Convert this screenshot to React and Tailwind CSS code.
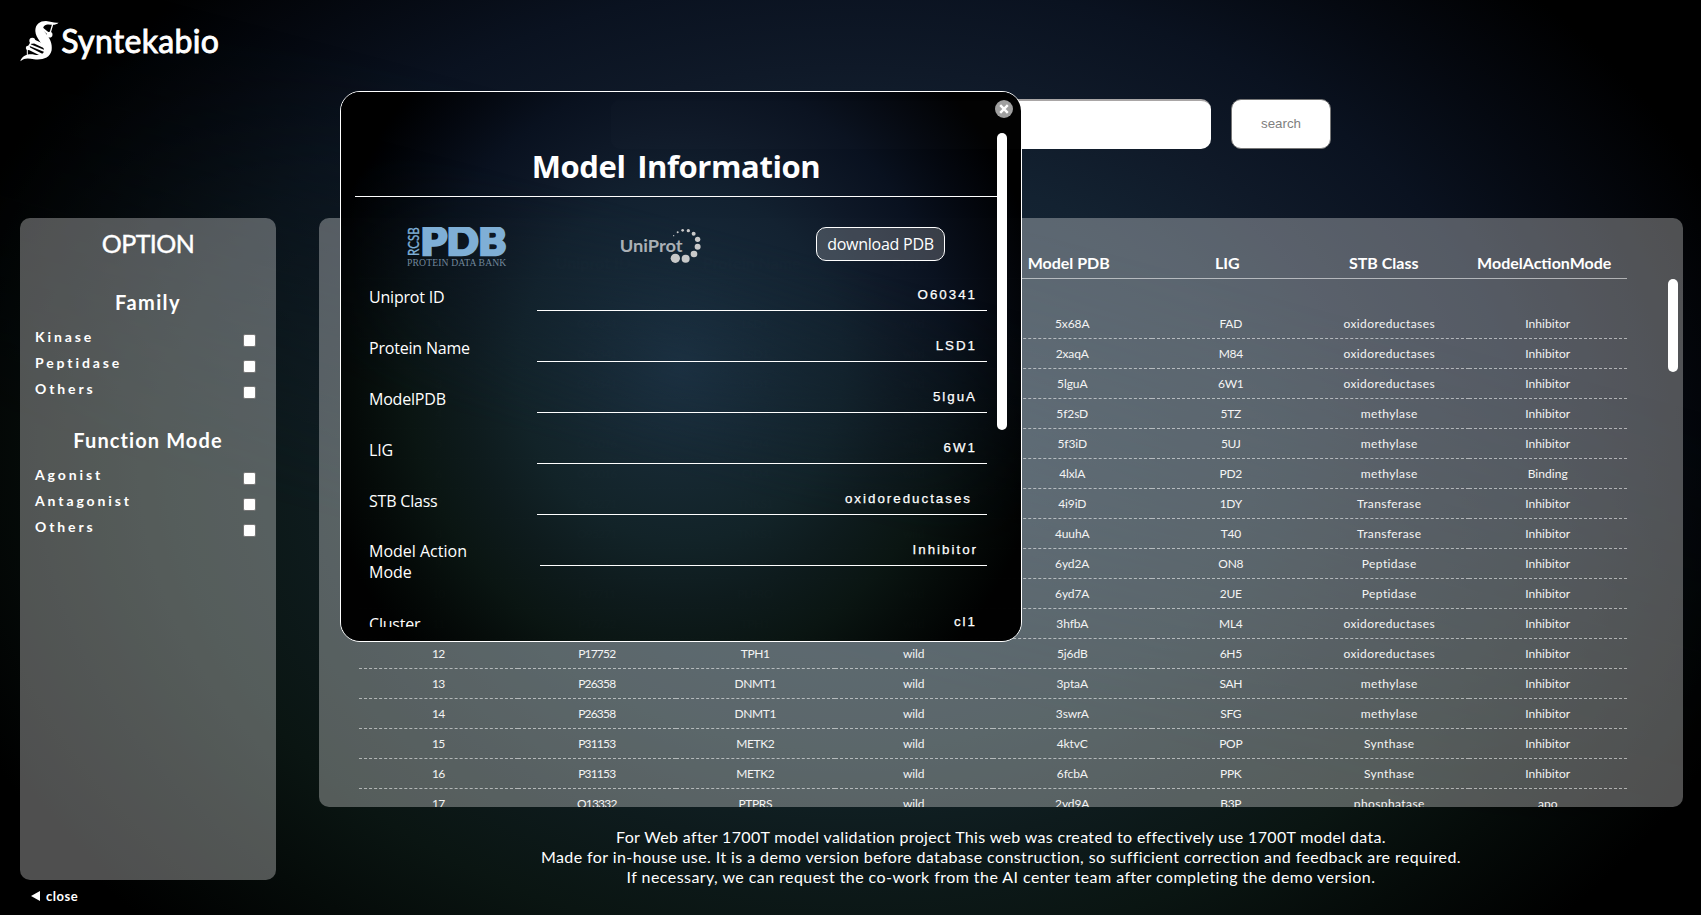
import React from "react";

const families = ["Kinase", "Peptidase", "Others"];
const modes = ["Agonist", "Antagonist", "Others"];

const headers = ["No", "Uniprot ID", "Protein Name", "State", "Model PDB", "LIG", "STB Class", "ModelActionMode"];

const rows = [
  ["1", "O60341", "LSD1", "wild", "5x68A", "FAD", "oxidoreductases", "Inhibitor"],
  ["2", "O60341", "LSD1", "wild", "2xaqA", "M84", "oxidoreductases", "Inhibitor"],
  ["3", "O60341", "LSD1", "wild", "5lguA", "6W1", "oxidoreductases", "Inhibitor"],
  ["4", "O60016", "CLR4", "wild", "5f2sD", "5TZ", "methylase", "Inhibitor"],
  ["5", "O60016", "CLR4", "wild", "5f3iD", "5UJ", "methylase", "Inhibitor"],
  ["6", "O60016", "CLR4", "wild", "4lxlA", "PD2", "methylase", "Binding"],
  ["7", "O95271", "TNKS1", "wild", "4i9iD", "1DY", "Transferase", "Inhibitor"],
  ["8", "O95271", "TNKS1", "wild", "4uuhA", "T40", "Transferase", "Inhibitor"],
  ["9", "P07711", "PLPRO", "wild", "6yd2A", "ON8", "Peptidase", "Inhibitor"],
  ["10", "P07711", "PLPRO", "wild", "6yd7A", "2UE", "Peptidase", "Inhibitor"],
  ["11", "P17752", "TPH1", "wild", "3hfbA", "ML4", "oxidoreductases", "Inhibitor"],
  ["12", "P17752", "TPH1", "wild", "5j6dB", "6H5", "oxidoreductases", "Inhibitor"],
  ["13", "P26358", "DNMT1", "wild", "3ptaA", "SAH", "methylase", "Inhibitor"],
  ["14", "P26358", "DNMT1", "wild", "3swrA", "SFG", "methylase", "Inhibitor"],
  ["15", "P31153", "METK2", "wild", "4ktvC", "POP", "Synthase", "Inhibitor"],
  ["16", "P31153", "METK2", "wild", "6fcbA", "PPK", "Synthase", "Inhibitor"],
  ["17", "Q13332", "PTPRS", "wild", "2yd9A", "B3P", "phosphatase", "apo"],
];

const columnTracking = [
  "tracking-[-0.8px]",
  "tracking-[-0.8px]",
  "tracking-[-0.4px]",
  "tracking-[-0.1px]",
  "tracking-[-0.1px]",
  "tracking-[-0.3px]",
  "tracking-[0.4px]",
  "tracking-[0.05px]",
];

const details = [
  ["Uniprot ID", "O60341"],
  ["Protein Name", "LSD1"],
  ["ModelPDB", "5lguA"],
  ["LIG", "6W1"],
  ["STB Class", "oxidoreductases"],
];

function Backdrop({ className = "" }) {
  return (
    <div className={`absolute inset-0 -z-10 bg-black ${className}`}>
      <div className="absolute inset-0 bg-[radial-gradient(53%_71%_at_50%_50%,#1b3042_0%,#162838_25%,#132231_45%,#0f1928_60%,#0a1220_74%,#050911_88%,#000000_104%)]" />
      <div className="absolute inset-0 bg-[radial-gradient(53%_71%_at_50%_50%,#1b3040_0%,#162832_25%,#122328_45%,#0e1b1d_60%,#0a1512_76%,#050b09_90%,#000000_106%)] [mask-image:linear-gradient(15deg,black_35%,transparent_70%)]" />
    </div>
  );
}

function Logo() {
  return (
    <div className="flex h-[82px] items-center pl-5">
      <svg viewBox="60 57 118 126" className="h-[42px] w-[39.3px]" fill="#fff" stroke="none">
        <path d="M176 65 C164 76 152 68 139 71 C128 74 127 84 135 94 C150 112 158 128 155 148 C150 172 126 178 102 175 C86 172 75 169 61 181 C66 163 84 157 104 161 C122 164 134 158 132 146 C129 128 107 112 106 90 C106 70 119 60 138 60 C153 61 162 67 176 65Z" />
        <g stroke="#fff" strokeLinecap="round">
          <path d="M97 119 L138 138" strokeWidth="11" />
          <path d="M92 133 L138 152" strokeWidth="6" />
          <path d="M84 141 L128 163" strokeWidth="8" />
          <path d="M82 142 V164" strokeWidth="3" />
          <path d="M97 119 L84 140" strokeWidth="5" />
          <path d="M126 82 L149 101" strokeWidth="7" />
          <path d="M149 101 L158 70" strokeWidth="4" />
        </g>
        <circle cx="97" cy="119" r="9" />
        <circle cx="84" cy="141" r="6.5" />
        <circle cx="149" cy="101" r="8.5" />
      </svg>
      <span className="ml-[2px] text-[32px] leading-none tracking-[0.3px] [-webkit-text-stroke:0.9px_white]">Syntekabio</span>
    </div>
  );
}

function PdbLogo() {
  return (
    <svg viewBox="36 38 300 122" className="h-[40.7px] w-[100px]">
      <text transform="translate(72 125) rotate(-90)" fontFamily="Lato, sans-serif" fontSize="46" fill="#7fafd6" stroke="#7fafd6" strokeWidth="1" textLength="86" lengthAdjust="spacingAndGlyphs">RCSB</text>
      <text x="77" y="122" fontFamily="Lato, sans-serif" fontWeight="900" fontSize="112" fill="#7fafd6" stroke="#7fafd6" strokeWidth="8" textLength="256" lengthAdjust="spacingAndGlyphs">PDB</text>
      <text x="36" y="156" fontFamily="Liberation Serif, serif" fontSize="29" fill="#71879b" textLength="298">PROTEIN DATA BANK</text>
    </svg>
  );
}

const uniprotDots = [
  [837, 66, 2], [849, 56, 3], [864, 50, 4], [881, 51, 5], [897, 60, 6],
  [909, 77, 8], [909, 99, 9], [898, 121, 10], [873, 135, 12], [842, 134, 14],
];

function UniprotLogo() {
  return (
    <svg viewBox="670 40 260 112" className="h-[37.3px] w-[86.7px]">
      <text x="675" y="116" fontFamily="Lato, sans-serif" fontWeight="700" fontSize="50" fill="#aab0b5" textLength="189" lengthAdjust="spacingAndGlyphs">UniProt</text>
      {uniprotDots.map(([cx, cy, r]) => (
        <circle key={`${cx}-${cy}`} cx={cx} cy={cy} r={r} fill="#c9c9c9" />
      ))}
    </svg>
  );
}

function OptionRow({ label }) {
  return (
    <label className="flex h-[26px] items-center justify-between pr-5 pl-[15px] text-[14px] font-bold tracking-[2.9px]">
      <span className="pb-[3px]">{label}</span>
      <span className="mt-[5px] size-[13px] rounded-[2px] border border-[#767676] bg-white" />
    </label>
  );
}

function Sidebar() {
  return (
    <aside className="h-[662px] w-[256px] shrink-0 rounded-[10px] bg-white/31">
      <h2 className="flex h-[51px] items-center justify-center text-[25px] tracking-[-0.6px] [-webkit-text-stroke:0.4px_white]">OPTION</h2>
      <h3 className="flex h-[56px] items-center justify-center pt-[10px] text-[20px] font-bold tracking-[1.4px]">Family</h3>
      {families.map((f) => <OptionRow key={f} label={f} />)}
      <h3 className="flex h-[60px] items-center justify-center pt-[14px] text-[20px] font-bold tracking-[1.1px]">Function Mode</h3>
      {modes.map((m) => <OptionRow key={m} label={m} />)}
    </aside>
  );
}

function ResultTable() {
  return (
    <section className="flex h-[589px] w-[1364px] shrink-0 justify-between overflow-hidden rounded-[10px] bg-white/31 pr-[5px] pl-10">
      <div className="w-[1268px]">
        <div className="grid h-[61px] grid-cols-8 border-b border-white/55 pt-[29px] text-center text-[16px] leading-[32px] font-bold">
          {headers.map((h) => (
            <div key={h} className={`whitespace-nowrap ${h === "STB Class" ? "pr-[11px]" : "pr-[7px]"}`}>{h}</div>
          ))}
        </div>
        <div className="pt-[30px]">
          {rows.map((row) => (
            <div key={row[0]} className="grid grid-cols-8 text-center text-[12px] text-[#f4f4f4]">
              {row.map((cell, i) => (
                <div key={i} className={`h-[30px] border-b border-dashed border-white/55 leading-[29px] ${columnTracking[i]}`}>{cell}</div>
              ))}
            </div>
          ))}
        </div>
      </div>
      <div className="mt-[61px] h-[93px] w-[10px] rounded-full bg-white" />
    </section>
  );
}

function DetailRow({ label, value, inset = "pr-[10px]" }) {
  return (
    <div className="flex h-[51px] items-start justify-between">
      <div className="pt-[3px] text-[16px] leading-[24px] tracking-[-0.2px]">{label}</div>
      <div className={`h-[29px] w-[450px] border-b border-white text-right font-['Liberation_Sans',Arial,sans-serif] text-[13.33px] leading-[26px] tracking-[2px] [-webkit-text-stroke:0.25px_white] ${inset}`}>{value}</div>
    </div>
  );
}

function ModelDialog() {
  return (
    <div role="dialog" className="absolute top-[91px] left-[340px] isolate z-10 h-[551px] w-[682px] overflow-hidden rounded-[20px] border border-white font-['Open_Sans','Noto_Sans_CJK_KR',sans-serif]">
      <Backdrop className="opacity-[0.994]" />
      <div className="flex h-[41px] justify-end pt-2 pr-2">
        <button aria-label="Close" className="grid size-[18px] place-items-center rounded-full bg-[#a0a0a0]">
          <svg viewBox="0 0 10 10" className="size-[10px]" stroke="#fff" strokeWidth="2.4">
            <path d="M1.2 1.2 8.8 8.8M8.8 1.2 1.2 8.8" />
          </svg>
        </button>
      </div>
      <div className="ml-[14px] flex h-[494px] w-[652px] overflow-hidden">
        <div className="w-[642px]">
          <h1 className="flex h-[64px] items-center justify-center border-b border-white pt-[3px] text-[31px] font-bold tracking-[-0.4px] [word-spacing:4px]">Model Information</h1>
          <div className="flex h-[85px] pt-[30px]">
            <div className="w-[213px] pl-[52px]"><PdbLogo /></div>
            <div className="w-[213px] pl-[50px]"><UniprotLogo /></div>
            <button className="ml-[35px] h-[34px] w-[129px] rounded-[10px] border border-white bg-white/20 text-[16px] tracking-[-0.25px]">download PDB</button>
          </div>
          <div className="pr-[10px] pl-[14px]">
            {details.map(([label, value]) => (
              <DetailRow key={label} label={label} value={value} inset={label === "STB Class" ? "pr-[15px]" : "pr-[10px]"} />
            ))}
            <div className="flex h-[72px] items-start justify-between">
              <div className="w-[120px] pt-[4px] text-[16px] leading-[21px]">Model Action Mode</div>
              <div className="h-[29px] w-[447px] border-b border-white pr-[9px] text-right font-['Liberation_Sans',Arial,sans-serif] text-[13.33px] leading-[26px] tracking-[2px] [-webkit-text-stroke:0.25px_white]">Inhibitor</div>
            </div>
            <DetailRow label="Cluster" value="cl1" />
          </div>
        </div>
        <div className="h-[297px] w-[10px] rounded-full bg-white" />
      </div>
    </div>
  );
}

export default function App() {
  return (
    <div className="relative isolate h-[915px] w-[1701px] overflow-hidden font-[Lato,sans-serif] text-white">
      <Backdrop />
      <Logo />
      <div className="flex h-[136px] gap-5 pt-[17px] pl-[611px]">
        <input className="h-[50px] w-[600px] rounded-[10px] border-t-2 border-[#a9a6a6] bg-white" />
        <button className="h-[50px] w-[100px] rounded-[10px] border border-[#767676] bg-white font-['Liberation_Sans',Arial,sans-serif] text-[13.33px] text-[#808080]">search</button>
      </div>
      <main className="flex h-[662px] gap-[43px] pl-5">
        <Sidebar />
        <div className="flex flex-col">
          <ResultTable />
          <footer className="pt-5 text-center text-[16px] leading-[20px]">
            <p className="tracking-[0.35px]">For Web after 1700T model validation project This web was created to effectively use 1700T model data.</p>
            <p className="tracking-[0.41px]">Made for in-house use. It is a demo version before database construction, so sufficient correction and feedback are required.</p>
            <p className="tracking-[0.44px]">If necessary, we can request the co-work from the AI center team after completing the demo version.</p>
          </footer>
        </div>
      </main>
      <div className="flex items-center gap-[6px] pt-[6px] pl-[31px] text-[13px] leading-[20px] font-bold tracking-[0.5px]">
        <svg viewBox="0 0 9 10" className="h-[10px] w-[9px]" fill="#fff"><path d="M0 5 9 0V10Z" /></svg>
        close
      </div>
      <ModelDialog />
    </div>
  );
}
